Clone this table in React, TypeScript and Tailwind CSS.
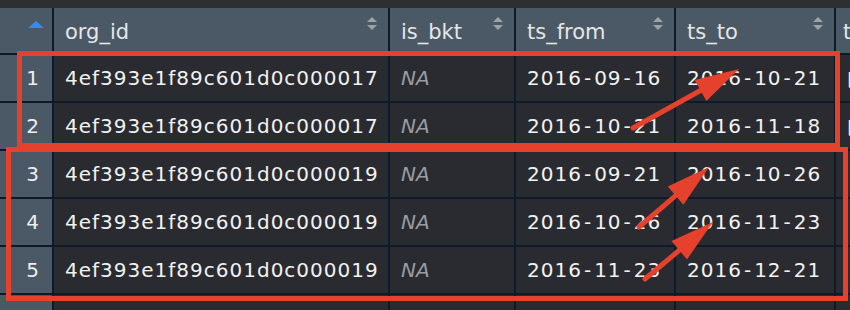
import React from "react";

const rows = [
  { n: 1, id: "4ef393e1f89c601d0c000017", from: "2016-09-16", to: "2016-10-21", x: "■" },
  { n: 2, id: "4ef393e1f89c601d0c000017", from: "2016-10-21", to: "2016-11-18", x: "■" },
  { n: 3, id: "4ef393e1f89c601d0c000019", from: "2016-09-21", to: "2016-10-26", x: "" },
  { n: 4, id: "4ef393e1f89c601d0c000019", from: "2016-10-26", to: "2016-11-23", x: "" },
  { n: 5, id: "4ef393e1f89c601d0c000019", from: "2016-11-23", to: "2016-12-21", x: "" },
  { n: 6, id: "4ef393e1f89c601d0c000019", from: "2016-12-21", to: "2017-01-18", x: "" },
];

function SortIcon() {
  return (
    <svg width="10" height="14" viewBox="0 0 10 14" className="mt-[9px] shrink-0">
      <polygon points="5,0 10,5 0,5" fill="#9aa3aa" />
      <polygon points="0,8 10,8 5,13" fill="#9aa3aa" />
    </svg>
  );
}

function DateText({ v }: { v: string }) {
  const parts = v.split("-");
  return (
    <span>
      {parts.map((p, i) => (
        <React.Fragment key={i}>
          {i > 0 && <span className="mx-[2px]">-</span>}
          {p}
        </React.Fragment>
      ))}
    </span>
  );
}

function Arrow({ x1, y1, x2, y2 }: { x1: number; y1: number; x2: number; y2: number }) {
  const dx = x2 - x1;
  const dy = y2 - y1;
  const len = Math.sqrt(dx * dx + dy * dy);
  const ux = dx / len;
  const uy = dy / len;
  const hl = 44;
  const hw = 12;
  const bx = x2 - ux * hl;
  const by = y2 - uy * hl;
  const px = -uy;
  const py = ux;
  const pts = `${x2},${y2} ${bx + px * hw},${by + py * hw} ${bx - px * hw},${by - py * hw}`;
  return (
    <g>
      <line x1={x1} y1={y1} x2={bx + ux * 4} y2={by + uy * 4} stroke="#e5412c" strokeWidth="5" strokeLinecap="round" />
      <polygon points={pts} fill="#e5412c" />
    </g>
  );
}

const cellBase = "bg-[#2a2b30] flex items-center pl-[11px] text-[20px] whitespace-nowrap overflow-hidden";

export default function App() {
  const font = { fontFamily: '"DejaVu Sans", sans-serif' };
  const headCell = "bg-[#4b5966] flex justify-between pl-[11px] pr-[11px] text-[21px] text-[#e4e6e8]";
  const cell = cellBase + " text-[#f2f2f2] tracking-[1px]";
  return (
    <div className="relative w-[850px] h-[310px] overflow-hidden bg-[#2e2f31]" style={font}>
      <div className="h-[8px] bg-[#2e2f31]" />
      <div className="grid grid-cols-[52px_334px_124px_158px_158px_120px] auto-rows-[46px] grid-rows-[45px] gap-[2px] bg-[#0d1a29]">
        <div className="bg-[#4b5966] flex justify-end pr-[8px] pt-[13px]">
          <svg width="16" height="8" viewBox="0 0 16 8">
            <polygon points="8,0 16,7 0,7" fill="#2f8fe6" />
          </svg>
        </div>
        {["org_id", "is_bkt", "ts_from", "ts_to"].map((h) => (
          <div key={h} className={headCell}>
            <span className="self-center leading-none pt-[3px]">{h}</span>
            <SortIcon />
          </div>
        ))}
        <div className="bg-[#4b5966] flex pl-[7px] text-[21px] text-[#e4e6e8]">
          <span className="self-center leading-none pt-[3px]">type</span>
        </div>
        {rows.map((r) => (
          <React.Fragment key={r.n}>
            <div className="bg-[#4b5966] flex items-center justify-end pr-[13px] text-[20px] text-[#eceef0]">
              {r.n}
            </div>
            <div className={cell}>{r.id}</div>
            <div className={cellBase + " italic text-[#9b9ca0]"}>NA</div>
            <div className={cell}>
              <DateText v={r.from} />
            </div>
            <div className={cell}>
              <DateText v={r.to} />
            </div>
            <div className={cellBase + " pl-[10px] text-[#f2f2f2] font-bold"}>{r.x}</div>
          </React.Fragment>
        ))}
      </div>

      <div className="absolute left-[17px] top-[51px] w-[823px] h-[97px] border-[5px] border-[#e5412c]" />
      <div className="absolute left-[6px] top-[147px] w-[842px] h-[154px] border-[5px] border-[#e5412c]" />

      <svg className="absolute left-0 top-0" width="850" height="310" viewBox="0 0 850 310">
        <Arrow x1={633} y1={128} x2={739} y2={69} />
        <Arrow x1={639} y1={227} x2={709} y2={167} />
        <Arrow x1={645} y1={279} x2={713} y2={222} />
      </svg>
    </div>
  );
}
